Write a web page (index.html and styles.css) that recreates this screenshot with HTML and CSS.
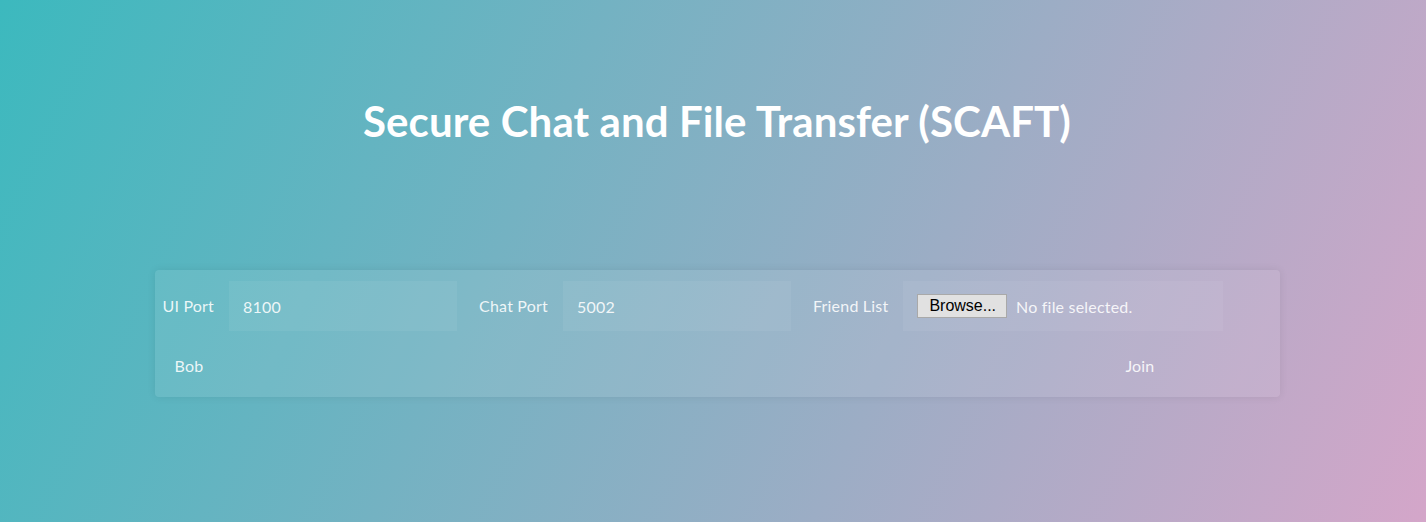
FILE: index.html
```html
<!DOCTYPE html>
<html>
<head>
<meta charset="utf-8">
<title>SCAFT</title>
<link rel="stylesheet" href="styles.css">
</head>
<body>
<main class="page">
  <h1 class="title">Secure Chat and File Transfer (SCAFT)</h1>
  <form class="card">
    <div class="row row-top">
      <label class="label label-first">UI Port</label>
      <div class="field field-port">8100</div>
      <label class="label">Chat Port</label>
      <div class="field field-port">5002</div>
      <label class="label">Friend List</label>
      <div class="field field-file">
        <span class="browse">Browse...</span>
        <span class="nofile">No file selected.</span>
      </div>
    </div>
    <div class="row row-bottom">
      <span class="name">Bob</span>
      <span class="join">Join</span>
    </div>
  </form>
</main>
</body>
</html>
```

FILE: styles.css
```css
html, body {
  margin: 0;
  padding: 0;
}
body {
  width: 1426px;
  height: 522px;
  overflow: hidden;
  background: linear-gradient(115deg, #3cb9be 0%, #d4a6c9 100%);
  font-family: Lato, "Open Sans", sans-serif;
  color: rgba(255, 255, 255, 0.88);
}
.page {
  display: flex;
  flex-direction: column;
  align-items: center;
  padding-left: 8px;
}
.title {
  margin: 96px 0 0 0;
  height: 50px;
  line-height: 50px;
  font-size: 42px;
  font-weight: 700;
  color: #ffffff;
  letter-spacing: 0.1px;
}
.card {
  margin: 124px 0 0 0;
  width: 1125px;
  height: 127px;
  box-sizing: border-box;
  background: rgba(255, 255, 255, 0.09);
  border-radius: 4px;
  box-shadow: 0 0 8px rgba(0, 0, 0, 0.08);
  display: flex;
  flex-direction: column;
}
.row {
  display: flex;
  align-items: center;
  padding-left: 8px;
}
.row-top {
  height: 65px;
  padding-top: 11px;
  padding-bottom: 4px;
  box-sizing: border-box;
  align-items: flex-start;
}
.row-bottom {
  height: 62px;
  padding-left: 20px;
  justify-content: space-between;
  padding-right: 125px;
  padding-bottom: 2px;
  box-sizing: border-box;
}
.label {
  font-size: 16px;
  line-height: 50px;
  margin-left: 22px;
  margin-right: 15px;
  white-space: nowrap;
  letter-spacing: 0.2px;
}
.label-first {
  margin-left: 0;
}
.field {
  height: 50px;
  box-sizing: border-box;
  background: rgba(255, 255, 255, 0.06);
  display: flex;
  align-items: center;
  padding-left: 14px;
  font-size: 16px;
  letter-spacing: 0.2px;
}
.field-port {
  width: 228px;
}
.field-file {
  width: 320px;
}
.browse {
  font-family: "Liberation Sans", Arial, sans-serif;
  font-size: 16px;
  letter-spacing: 0;
  color: #000;
  background: #e1e1e1;
  border: 1px solid #a9a9a9;
  height: 24px;
  box-sizing: border-box;
  line-height: 22px;
  padding: 0 10px 0 11px;
  margin-right: 9px;
}
.nofile {
  font-size: 16px;
}
.name, .join {
  font-size: 16px;
  letter-spacing: 0.2px;
}
```
